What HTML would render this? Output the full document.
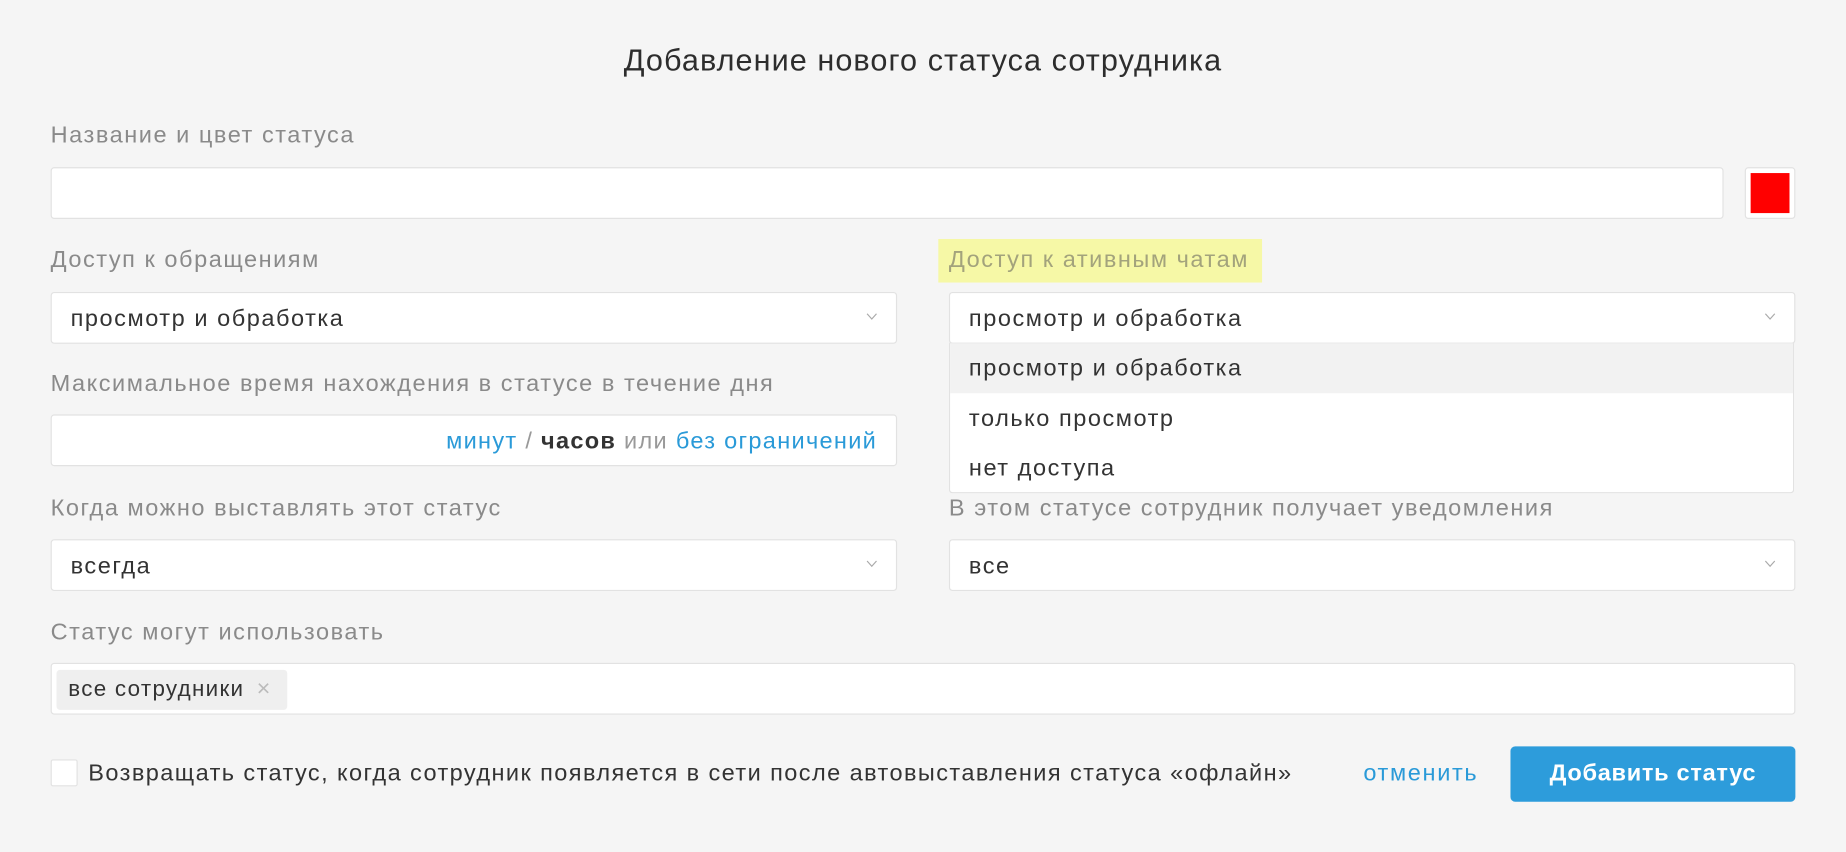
<!DOCTYPE html>
<html><head><meta charset="utf-8"><style>
html,body{margin:0;padding:0;background:#f5f5f5;}
body{width:1846px;height:852px;overflow:hidden;}
#w{position:absolute;left:0;top:0;width:1568px;height:724px;transform:scale(1.1773);transform-origin:0 0;font-family:"Liberation Sans",sans-serif;}
.a{position:absolute;}
.lbl{position:absolute;font-size:20px;letter-spacing:1.3px;color:#8a8a8a;line-height:22px;white-space:nowrap;}
.box{position:absolute;background:#fff;border:1px solid #e2e2e2;border-radius:3px;box-sizing:border-box;height:44px;}
.val{position:absolute;left:16px;top:11px;font-size:20px;letter-spacing:1.3px;color:#333;line-height:22px;white-space:nowrap;}
.chev{position:absolute;right:16px;top:17px;width:9px;height:6px;}
.it{position:absolute;left:0;right:0;height:42px;}
.it span{position:absolute;left:16px;top:10px;font-size:20px;letter-spacing:1.3px;color:#333;line-height:22px;}
.blue{color:#2a9ad8;}
</style></head><body><div id="w">
<div class="a" style="left:0;width:1568px;top:36px;text-align:center;font-size:26px;letter-spacing:0.9px;color:#2d2d2d;">Добавление нового статуса сотрудника</div>

<div class="lbl" style="left:43px;top:104px;">Название и цвет статуса</div>
<div class="box" style="left:43px;top:142px;width:1421px;"></div>
<div class="box" style="left:1482px;top:142px;width:43px;"><div class="a" style="left:4px;top:4px;width:33px;height:34px;background:#ff0000;"></div></div>

<div class="lbl" style="left:43px;top:210px;">Доступ к обращениям</div>
<div class="a" style="left:797px;top:203px;width:275px;height:37px;background:#f6f8a6;"></div>
<div class="lbl" style="left:806px;top:210px;color:#a3a37c;">Доступ к ативным чатам</div>

<div class="box" style="left:43px;top:248px;width:719px;"><div class="val">просмотр и обработка</div>
<svg class="chev" viewBox="0 0 9 6"><path d="M0.5 0.5L4.5 5L8.5 0.5" fill="none" stroke="#aaa" stroke-width="1"/></svg></div>
<div class="box" style="left:806px;top:248px;width:719px;"><div class="val">просмотр и обработка</div>
<svg class="chev" viewBox="0 0 9 6"><path d="M0.5 0.5L4.5 5L8.5 0.5" fill="none" stroke="#aaa" stroke-width="1"/></svg></div>

<div class="lbl" style="left:43px;top:315px;">Максимальное время нахождения в статусе в течение дня</div>
<div class="box" style="left:43px;top:352px;width:719px;"><div class="a" style="right:16px;top:11px;font-size:20px;letter-spacing:1.1px;line-height:22px;white-space:nowrap;color:#999;"><span class="blue">минут</span> / <b style="color:#333;">часов</b> или <span class="blue">без ограничений</span></div></div>

<div class="lbl" style="left:43px;top:421px;">Когда можно выставлять этот статус</div>
<div class="lbl" style="left:806px;top:421px;">В этом статусе сотрудник получает уведомления</div>

<div class="a" style="left:806px;top:291px;width:718px;height:128px;background:#fff;border:1px solid #e2e2e2;border-top:1px solid #e6e6e6;box-sizing:border-box;border-radius:0 0 3px 3px;">
<div class="it" style="top:0;background:#f2f2f2;"><span>просмотр и обработка</span></div>
<div class="it" style="top:43px;"><span>только просмотр</span></div>
<div class="it" style="top:85px;"><span>нет доступа</span></div>
</div>

<div class="box" style="left:43px;top:458px;width:719px;"><div class="val">всегда</div>
<svg class="chev" viewBox="0 0 9 6"><path d="M0.5 0.5L4.5 5L8.5 0.5" fill="none" stroke="#aaa" stroke-width="1"/></svg></div>
<div class="box" style="left:806px;top:458px;width:719px;"><div class="val">все</div>
<svg class="chev" viewBox="0 0 9 6"><path d="M0.5 0.5L4.5 5L8.5 0.5" fill="none" stroke="#aaa" stroke-width="1"/></svg></div>

<div class="lbl" style="left:43px;top:526px;">Статус могут использовать</div>
<div class="box" style="left:43px;top:563px;width:1482px;">
<div class="a" style="left:4px;top:5px;width:196px;height:34px;background:#efefef;border-radius:3px;">
<span class="a" style="left:10px;top:7px;font-size:19px;letter-spacing:1.1px;color:#333;line-height:20px;white-space:nowrap;">все сотрудники</span>
<span class="a" style="left:170px;top:6px;font-size:20px;color:#bbb;line-height:20px;">×</span></div></div>

<div class="a" style="left:43px;top:645px;width:23px;height:23px;background:#fff;border:1px solid #e2e2e2;border-radius:2px;box-sizing:border-box;"></div>
<div class="a" style="left:75px;top:646px;font-size:20px;letter-spacing:1.2px;color:#333;line-height:22px;white-space:nowrap;">Возвращать статус, когда сотрудник появляется в сети после автовыставления статуса «офлайн»</div>
<div class="a blue" style="left:1158px;top:646px;font-size:20px;letter-spacing:1.4px;line-height:22px;">отменить</div>
<div class="a" style="left:1283px;top:634px;width:242px;height:47px;background:#2d9cdb;border-radius:4px;color:#fff;font-weight:bold;font-size:20px;letter-spacing:0.6px;line-height:47px;text-align:center;">Добавить статус</div>
</div></body></html>
